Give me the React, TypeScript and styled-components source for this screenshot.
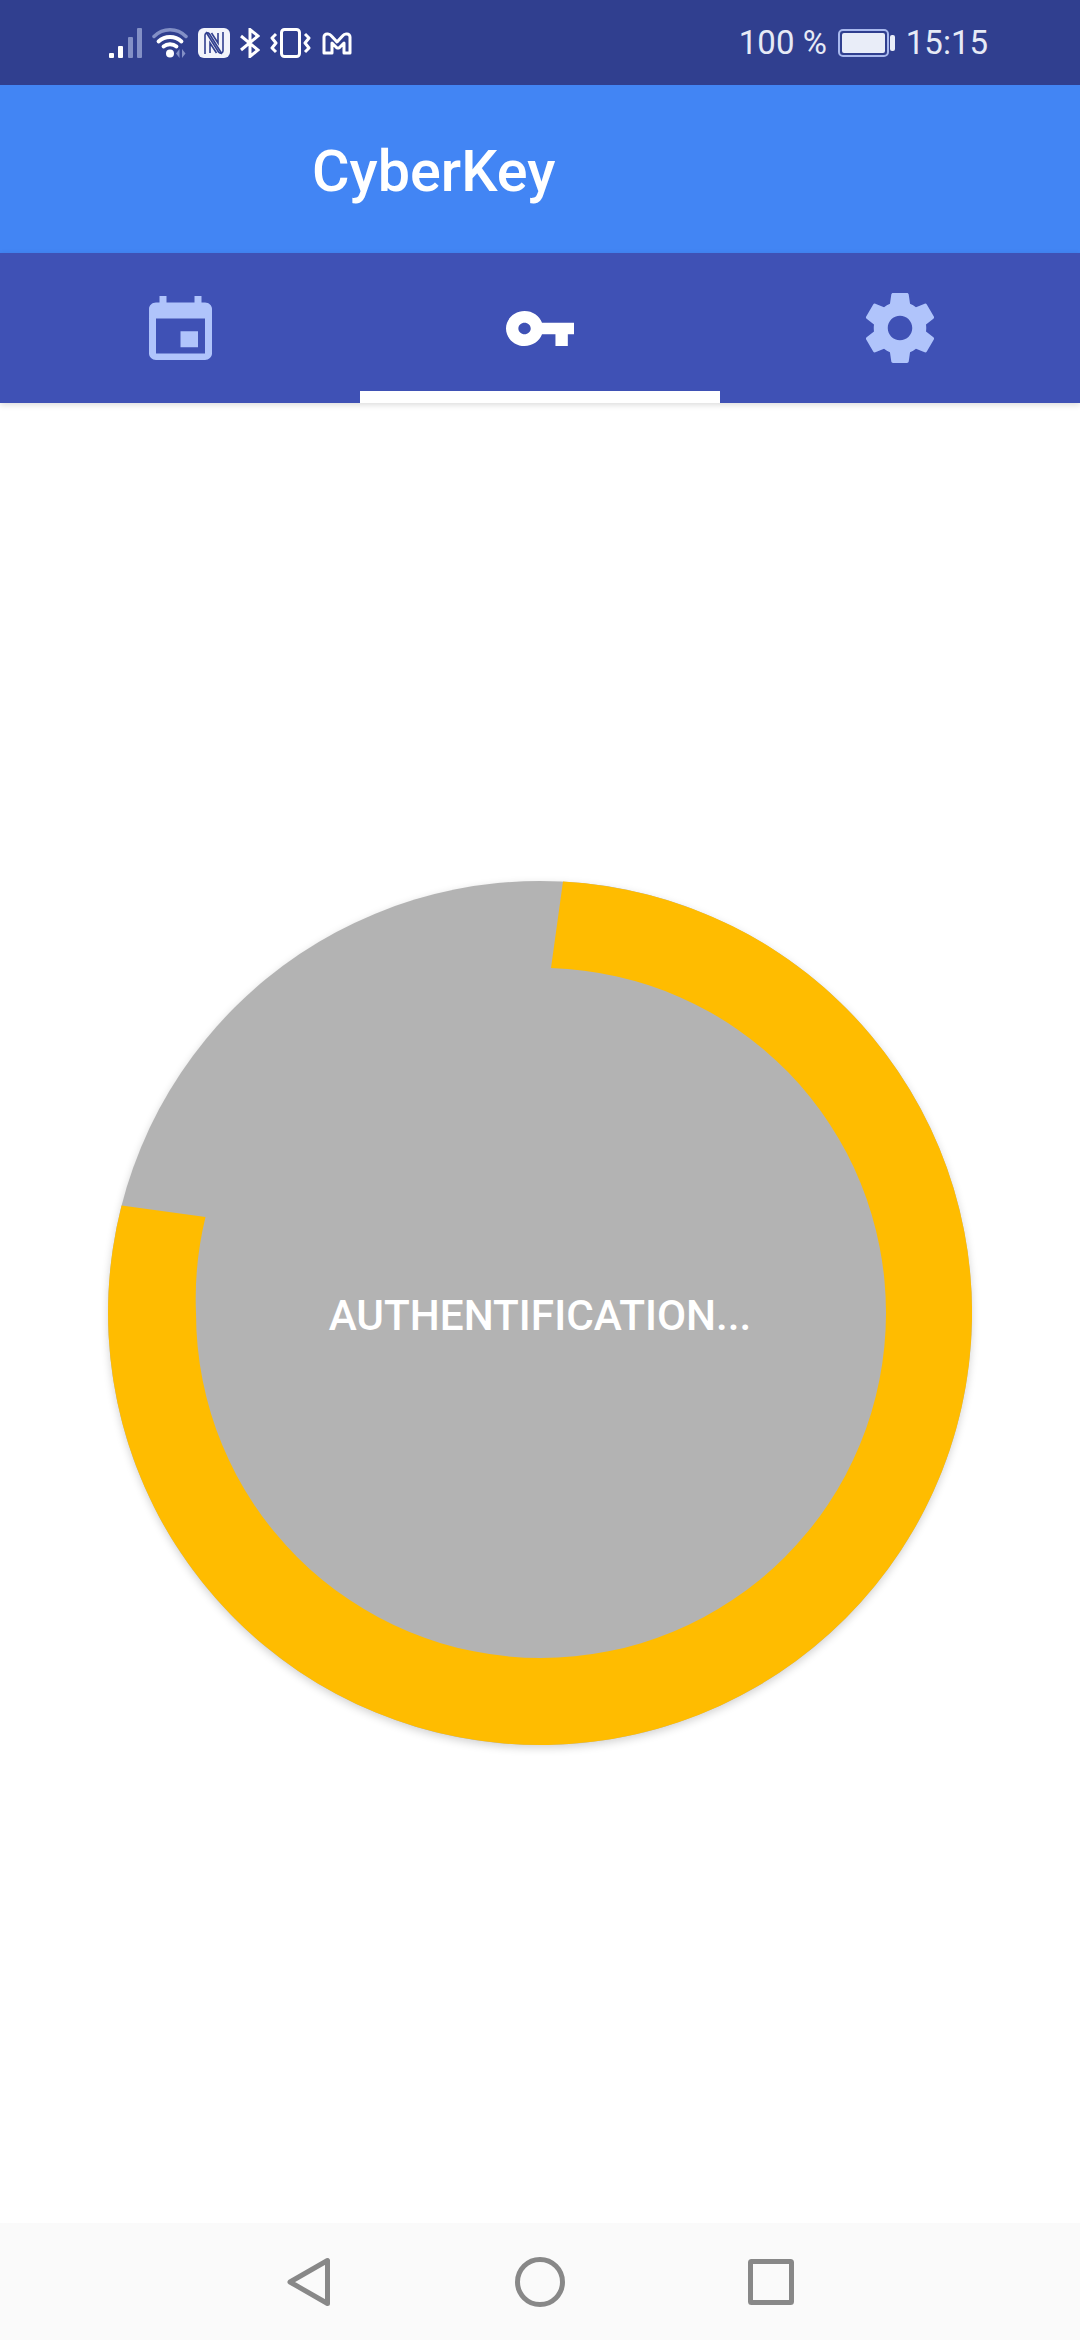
import styled, { createGlobalStyle } from 'styled-components'

const GlobalStyle = createGlobalStyle`
  html, body {
    margin: 0;
    padding: 0;
    background: #ffffff;
  }
  * {
    box-sizing: border-box;
  }
`

const Screen = styled.div`
  width: 1080px;
  height: 2340px;
  display: flex;
  flex-direction: column;
  overflow: hidden;
  font-family: Roboto, 'Liberation Sans', sans-serif;
  background: #ffffff;
`

const StatusBar = styled.div`
  height: 85px;
  flex: none;
  display: flex;
  align-items: center;
  justify-content: space-between;
  padding: 0 92px 0 109px;
  background: #303f8f;
  color: #e6eaf6;
`

const StatusGroup = styled.div<{ $gap: number }>`
  display: flex;
  align-items: center;
  gap: ${({ $gap }) => $gap}px;
`

const StatusIcon = styled.svg`
  display: block;
  flex: none;
`

const StatusText = styled.span`
  font-size: 33px;
  line-height: 85px;
  font-weight: 400;
`

const AppBar = styled.header`
  height: 168px;
  flex: none;
  display: flex;
  align-items: center;
  padding: 5px 0 0 312px;
  background: #4285f4;
`

const Title = styled.h1`
  margin: 0;
  font-size: 57.5px;
  font-weight: 500;
  color: #ffffff;
`

const TabBar = styled.nav`
  height: 150px;
  flex: none;
  display: grid;
  grid-template-columns: repeat(3, 1fr);
  background: #3f51b5;
  box-shadow: 0 2px 6px rgba(0, 0, 0, 0.14);
  position: relative;
`

const Tab = styled.div<{ $active?: boolean }>`
  display: flex;
  align-items: center;
  justify-content: center;
  color: ${({ $active }) => ($active ? '#ffffff' : '#b0c4fb')};
  border-bottom: 12px solid ${({ $active }) => ($active ? '#ffffff' : 'transparent')};
  padding-top: 12px;
`

const Main = styled.main`
  flex: 1;
  display: flex;
  align-items: center;
  justify-content: center;
`

const Gauge = styled.div`
  position: relative;
  width: 864px;
  height: 864px;
  display: flex;
  align-items: center;
  justify-content: center;
  border-radius: 50%;
  background: #b3b3b3;
  box-shadow: 0 3px 8px rgba(0, 0, 0, 0.18);
`

const GaugeRing = styled.svg`
  position: absolute;
  inset: 0;
`

const GaugeLabel = styled.span`
  position: relative;
  padding-top: 5px;
  font-size: 42.3px;
  font-weight: 500;
  color: #ffffff;
`

const NavBar = styled.div`
  height: 117px;
  flex: none;
  display: flex;
  align-items: center;
  justify-content: center;
  background: #fafafa;
`

const NavButton = styled.div`
  width: 231px;
  display: flex;
  justify-content: center;
  color: #888888;
`

function SignalIcon() {
  return (
    <StatusIcon width="33" height="30" viewBox="0 0 33 30">
      <rect x="0" y="25" width="5" height="5" rx="1" fill="#fff" />
      <rect x="9" y="18" width="5" height="12" rx="1" fill="#fff" />
      <rect x="19" y="9" width="5" height="21" rx="1" fill="#8390c6" />
      <rect x="28" y="0" width="5" height="30" rx="1" fill="#8390c6" />
    </StatusIcon>
  )
}

function WifiIcon() {
  return (
    <StatusIcon width="36" height="30" viewBox="0 0 36 30" fill="none" strokeLinecap="round">
      <path d="M2 8.500C11 -0.500 25 -0.500 34 8.500" stroke="#8390c6" strokeWidth="3.500" />
      <path d="M6.500 13.500C13 7.500 23 7.500 29.500 13.500" stroke="#fff" strokeWidth="3.800" />
      <path d="M11.500 18.500C15 15.500 21 15.500 24.500 18.500" stroke="#fff" strokeWidth="3.800" />
      <circle cx="18" cy="25.500" r="4" fill="#fff" />
      <path d="M27.500 21v9l-3.500-4.500zM30 21v9l3.500-4.500z" fill="#8390c6" />
    </StatusIcon>
  )
}

function NfcIcon() {
  return (
    <StatusIcon width="32" height="30" viewBox="0 0 32 30" fill="none">
      <rect width="32" height="30" rx="6" fill="#f2f4fb" />
      <path
        d="M7 26V7c0-2 3-3 4.500-1L24 26M25 4v19c0 2-3 3-4.500 1L8 4M12 25V15l6.500 10M20 5v10L13.500 5"
        stroke="#303f8f"
        strokeWidth="1.600"
      />
    </StatusIcon>
  )
}

function BluetoothIcon() {
  return (
    <StatusIcon width="20" height="30" viewBox="0 0 20 30" fill="none" stroke="#fff" strokeWidth="3">
      <path d="M1 8l17 14-8 6.500V1.500L18 8 1 22" />
    </StatusIcon>
  )
}

function VibrateIcon() {
  return (
    <StatusIcon width="41" height="30" viewBox="0 0 41 30" fill="none" stroke="#fff" strokeWidth="3">
      <rect x="11.500" y="1.500" width="18" height="27" rx="3" />
      <path d="M6 6L2 10l4 5-4 5 4 4" strokeLinejoin="round" />
      <path d="M35 6l4 4-4 5 4 5-4 4" strokeLinejoin="round" />
    </StatusIcon>
  )
}

function MailIcon() {
  return (
    <StatusIcon width="32" height="30" viewBox="0 0 32 30" fill="none" stroke="#fff" strokeWidth="3">
      <path
        d="M3 25V9a3 3 0 0 1 3-3h1c1.500 0 2.500.8 3.500 2L16 14l5.500-6c1-1.200 2-2 3.500-2h1a3 3 0 0 1 3 3v16h-6V15l-5 5h-2l-5-5v10z"
        strokeLinejoin="round"
      />
    </StatusIcon>
  )
}

function BatteryIcon() {
  return (
    <StatusIcon width="57" height="30" viewBox="0 0 57 30" fill="none">
      <rect x="1" y="2" width="49" height="26" rx="4" stroke="#a9b9ee" strokeWidth="2" />
      <rect x="4" y="5" width="43" height="20" rx="2" fill="#e9edf8" />
      <rect x="52" y="7" width="5" height="16" rx="2" fill="#e9edf8" />
    </StatusIcon>
  )
}

function CalendarIcon() {
  return (
    <svg width="63" height="64" viewBox="3 1 18 20" preserveAspectRatio="none" fill="currentColor">
      <path d="M17 12h-5v5h5v-5zM16 1v2H8V1H6v2H5c-1.110 0-1.990.9-1.990 2L3 19c0 1.100.89 2 2 2h14c1.100 0 2-.9 2-2V5c0-1.100-.9-2-2-2h-1V1h-2zm3 18H5V8h14v11z" />
    </svg>
  )
}

function KeyIcon() {
  return (
    <svg width="68" height="35" viewBox="1 6 22 12" preserveAspectRatio="none" fill="currentColor">
      <path d="M12.650 10C11.830 7.670 9.610 6 7 6c-3.310 0-6 2.690-6 6s2.690 6 6 6c2.610 0 4.830-1.670 5.650-4H17v4h4v-4h2v-4H12.650zM7 14c-1.100 0-2-.9-2-2s.9-2 2-2 2 .9 2 2-.9 2-2 2z" />
    </svg>
  )
}

function GearIcon() {
  return (
    <svg width="84" height="84" viewBox="0 0 24 24" fill="currentColor">
      <path d="M19.430 12.980c.04-.32.07-.64.07-.98s-.03-.66-.07-.98l2.110-1.650c.19-.15.24-.42.12-.64l-2-3.460c-.12-.22-.39-.3-.61-.22l-2.490 1c-.52-.4-1.080-.73-1.690-.98l-.38-2.650C14.460 2.180 14.250 2 14 2h-4c-.25 0-.46.18-.49.42l-.38 2.650c-.61.25-1.170.59-1.690.98l-2.490-1c-.23-.09-.49 0-.61.22l-2 3.460c-.13.22-.07.49.12.64l2.110 1.650c-.04.32-.07.65-.07.98s.03.66.07.98l-2.110 1.650c-.19.15-.24.42-.12.64l2 3.460c.12.22.39.3.61.22l2.490-1c.52.4 1.080.73 1.690.98l.38 2.650c.03.24.24.42.49.42h4c.25 0 .46-.18.49-.42l.38-2.650c.61-.25 1.170-.59 1.690-.98l2.490 1c.23.09.49 0 .61-.22l2-3.460c.12-.22.07-.49-.12-.64l-2.110-1.650zM12 15.500c-1.930 0-3.500-1.570-3.500-3.500s1.570-3.500 3.500-3.500 3.500 1.570 3.500 3.500-1.570 3.500-3.500 3.500z" />
    </svg>
  )
}

export default function App() {
  return (
    <Screen>
      <GlobalStyle />
      <StatusBar>
        <StatusGroup $gap={10}>
          <SignalIcon />
          <WifiIcon />
          <NfcIcon />
          <BluetoothIcon />
          <VibrateIcon />
          <MailIcon />
        </StatusGroup>
        <StatusGroup $gap={11}>
          <StatusText>100 %</StatusText>
          <BatteryIcon />
          <StatusText>15:15</StatusText>
        </StatusGroup>
      </StatusBar>
      <AppBar>
        <Title>CyberKey</Title>
      </AppBar>
      <TabBar>
        <Tab>
          <CalendarIcon />
        </Tab>
        <Tab $active>
          <KeyIcon />
        </Tab>
        <Tab>
          <GearIcon />
        </Tab>
      </TabBar>
      <Main>
        <Gauge>
          <GaugeRing width="864" height="864" viewBox="0 0 864 864">
            {/* the two ends are cut straight, not along the radius */}
            <path
              d="M455 0.600A432 432 0 1 1 13.600 324.600L97.500 336A345 345 0 0 0 88 432A345 345 0 0 0 433 777A345 345 0 0 0 778 432A345 345 0 0 0 443 87.100Z"
              fill="#ffbc00"
            />
          </GaugeRing>
          <GaugeLabel>AUTHENTIFICATION...</GaugeLabel>
        </Gauge>
      </Main>
      <NavBar>
        <NavButton>
          <svg width="44" height="50" viewBox="0 0 44 50" fill="none" stroke="currentColor" strokeWidth="5" strokeLinejoin="round">
            <path d="M40.500 3.500V46.500L3 25Z" />
          </svg>
        </NavButton>
        <NavButton>
          <svg width="50" height="50" viewBox="0 0 50 50" fill="none" stroke="currentColor" strokeWidth="5">
            <circle cx="25" cy="25" r="22.500" />
          </svg>
        </NavButton>
        <NavButton>
          <svg width="46" height="46" viewBox="0 0 46 46" fill="none" stroke="currentColor" strokeWidth="5" strokeLinejoin="round">
            <rect x="2.500" y="2.500" width="41" height="41" rx="1" />
          </svg>
        </NavButton>
      </NavBar>
    </Screen>
  )
}
